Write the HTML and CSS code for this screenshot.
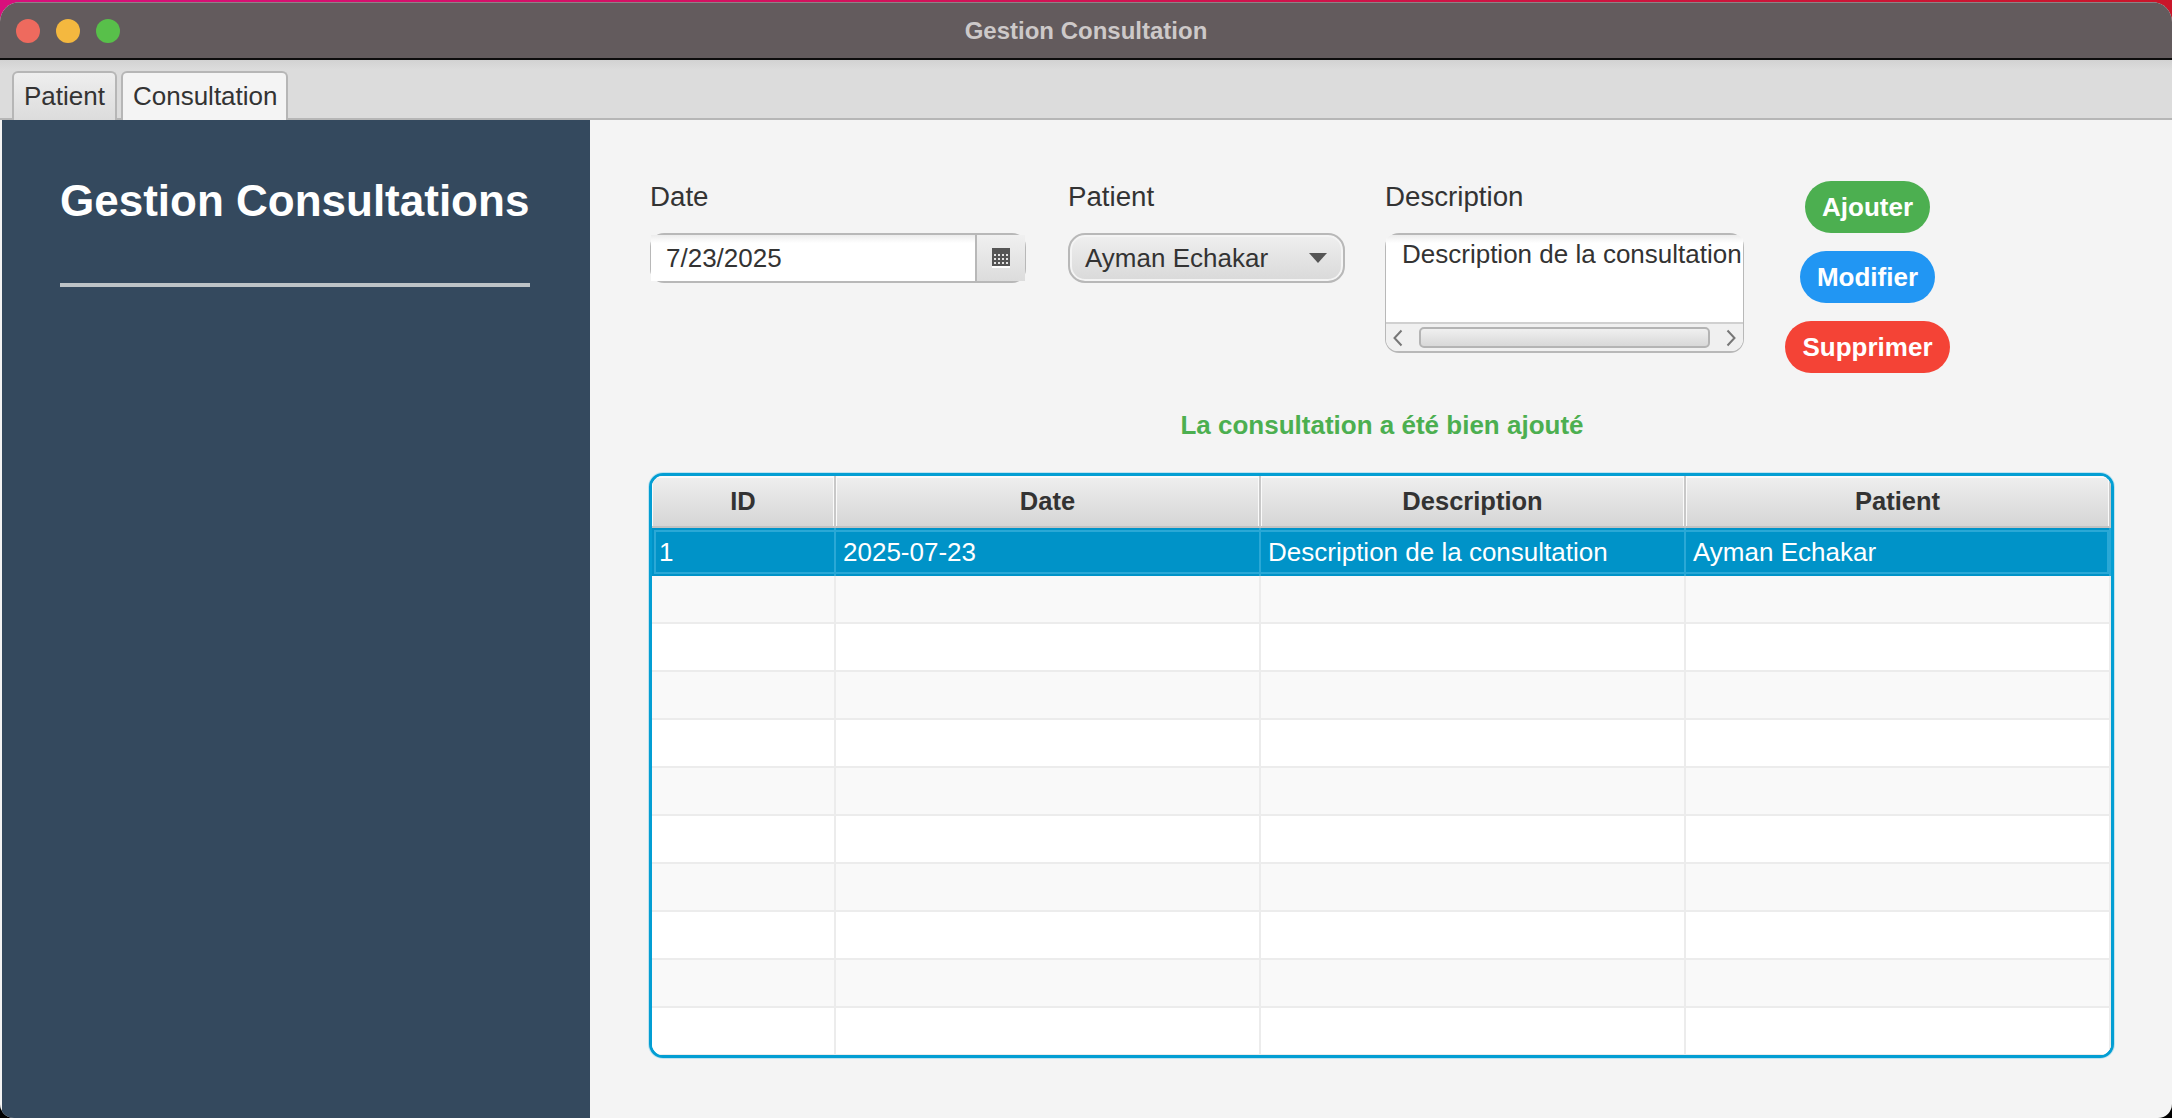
FILE: index.html
```html
<!DOCTYPE html>
<html lang="fr">
<head>
    <meta charset="UTF-8">
    <meta name="viewport" content="width=device-width, initial-scale=1.0">
    <title>Gestion Consultation</title>
    <link rel="stylesheet" href="styles.css">
</head>
<body>
    <div class="window">
        <!-- Barre de titre -->
        <div class="titlebar">
            <div class="lights">
                <span class="light light-red"></span>
                <span class="light light-yellow"></span>
                <span class="light light-green"></span>
            </div>
            <div class="window-title">Gestion Consultation</div>
        </div>

        <!-- Onglets -->
        <div class="tabs">
            <div class="tab">Patient</div>
            <div class="tab tab-active">Consultation</div>
        </div>

        <div class="content">
            <!-- Panneau gauche -->
            <aside class="sidebar">
                <h1 class="sidebar-title">Gestion Consultations</h1>
                <div class="sidebar-rule"></div>
            </aside>

            <main class="main">
                <!-- Formulaire -->
                <div class="form-row">
                    <div class="field field-date">
                        <div class="field-label">Date</div>
                        <div class="date-picker">
                            <div class="date-inner">
                                <div class="date-value">7/23/2025</div>
                                <div class="date-button">
                                    <svg class="calendar-icon" width="18" height="20" viewBox="0 0 18 20">
                                        <rect width="18" height="18" fill="#555"/>
                                        <rect y="18" width="18" height="2" fill="#fff"/>
                                        <g fill="#e4e4e4">
                                            <rect x="2" y="6" width="2" height="2"/><rect x="6" y="6" width="2" height="2"/><rect x="10" y="6" width="2" height="2"/><rect x="14" y="6" width="2" height="2"/>
                                            <rect x="2" y="10" width="2" height="2"/><rect x="6" y="10" width="2" height="2"/><rect x="10" y="10" width="2" height="2"/><rect x="14" y="10" width="2" height="2"/>
                                            <rect x="2" y="14" width="2" height="2"/><rect x="6" y="14" width="2" height="2"/><rect x="10" y="14" width="2" height="2"/><rect x="14" y="14" width="2" height="2"/>
                                        </g>
                                    </svg>
                                </div>
                            </div>
                        </div>
                    </div>

                    <div class="field field-patient">
                        <div class="field-label">Patient</div>
                        <div class="combo">
                            <span class="combo-value">Ayman Echakar</span>
                            <svg width="18" height="10" viewBox="0 0 18 10"><path d="M0 0H18L9 10Z" fill="#555"/></svg>
                        </div>
                    </div>

                    <div class="field field-description">
                        <div class="field-label">Description</div>
                        <div class="text-area">
                            <div class="text-area-inner">
                                <div class="text-area-value">Description de la consultation</div>
                                <div class="scrollbar">
                                    <svg width="12" height="18" viewBox="0 0 12 18"><path d="M9.5 1.5L2.5 9L9.5 16.5" fill="none" stroke="#777" stroke-width="2"/></svg>
                                    <div class="scroll-thumb"></div>
                                    <svg width="12" height="18" viewBox="0 0 12 18"><path d="M2.5 1.5L9.5 9L2.5 16.5" fill="none" stroke="#777" stroke-width="2"/></svg>
                                </div>
                            </div>
                        </div>
                    </div>

                    <div class="actions">
                        <button class="btn btn-add">Ajouter</button>
                        <button class="btn btn-edit">Modifier</button>
                        <button class="btn btn-delete">Supprimer</button>
                    </div>
                </div>

                <div class="message">La consultation a été bien ajouté</div>

                <!-- Tableau -->
                <div class="table-box">
                    <table class="table">
                        <colgroup>
                            <col class="col-id"><col class="col-wide"><col class="col-wide"><col class="col-wide">
                        </colgroup>
                        <thead>
                            <tr><th>ID</th><th>Date</th><th>Description</th><th>Patient</th></tr>
                        </thead>
                        <tbody>
                            <tr class="row-selected"><td>1</td><td>2025-07-23</td><td>Description de la consultation</td><td>Ayman Echakar</td></tr>
                            <tr><td></td><td></td><td></td><td></td></tr>
                            <tr><td></td><td></td><td></td><td></td></tr>
                            <tr><td></td><td></td><td></td><td></td></tr>
                            <tr><td></td><td></td><td></td><td></td></tr>
                            <tr><td></td><td></td><td></td><td></td></tr>
                            <tr><td></td><td></td><td></td><td></td></tr>
                            <tr><td></td><td></td><td></td><td></td></tr>
                            <tr><td></td><td></td><td></td><td></td></tr>
                            <tr><td></td><td></td><td></td><td></td></tr>
                            <tr><td></td><td></td><td></td><td></td></tr>
                        </tbody>
                    </table>
                </div>
            </main>
        </div>
    </div>
</body>
</html>
```

FILE: styles.css
```css
/* Fond derrière la fenêtre */
body {
    margin: 0;
    height: 100vh;
    overflow: hidden;
    background: linear-gradient(to bottom, transparent 0, transparent 30px, #000 30px), linear-gradient(to right, #d80f7c, #c9162a);
    font-family: "Liberation Sans", Arial, sans-serif;
    color: #333;
}

.window {
    margin-top: 2px;
    height: 1116px;
    display: flex;
    flex-direction: column;
    border-radius: 20px 20px 14px 14px;
    overflow: hidden;
    background-color: #f4f4f4;
}

/* Barre de titre */
.titlebar {
    height: 56px;
    flex: none;
    display: flex;
    align-items: center;
    justify-content: center;
    position: relative;
    background-color: #635b5d;
    border-top: 1px solid #8a8486;
    border-bottom: 2px solid #0d0c0c;
    box-sizing: border-box;
    height: 58px;
}

.lights {
    position: absolute;
    left: 16px;
    top: 16px;
    display: flex;
    gap: 16px;
}

.light {
    width: 24px;
    height: 24px;
    border-radius: 50%;
}

.light-red { background-color: #ee6a5e; }
.light-yellow { background-color: #f4b83f; }
.light-green { background-color: #58c04a; }

.window-title {
    font-size: 24px;
    font-weight: bold;
    color: #cdc9c9;
}

/* Onglets */
.tabs {
    height: 60px;
    flex: none;
    box-sizing: border-box;
    display: flex;
    align-items: flex-end;
    gap: 4px;
    padding-left: 12px;
    background: linear-gradient(to bottom, #d2d2d2, #dcdcdc 10px);
    border-bottom: 2px solid #b6b6b6;
}

.tab {
    height: 49px;
    margin-bottom: -2px;
    box-sizing: border-box;
    padding: 0 10px;
    display: flex;
    align-items: center;
    font-size: 26px;
    color: #333;
    background: linear-gradient(to bottom, #eeeeee, #dcdcdc);
    border: 2px solid #b6b6b6;
    border-bottom: none;
    border-radius: 6px 6px 0 0;
}

.tab-active {
    background: #f4f4f4;
    padding: 0 8px 0 10px;
}

.content {
    flex: 1;
    display: flex;
    min-height: 0;
}

/* Panneau gauche */
.sidebar {
    width: 588px;
    margin-left: 2px;
    flex: none;
    box-sizing: border-box;
    padding: 56px 60px 0 58px;
    background-color: #34495e;
}

.sidebar-title {
    margin: 0;
    font-size: 44px;
    line-height: 50px;
    font-weight: bold;
    color: #fff;
    white-space: nowrap;
}

.sidebar-rule {
    margin-top: 57px;
    height: 4px;
    background-color: #bdc3c7;
}

/* Zone principale */
.main {
    flex: 1;
    box-sizing: border-box;
    padding: 61px 0 0 58px;
}

.form-row {
    display: flex;
    align-items: flex-start;
    padding-left: 2px;
}

.field-label {
    height: 32px;
    line-height: 32px;
    margin-bottom: 20px;
    font-size: 27.7px;
    color: #333;
}

.field-date { width: 376px; margin-right: 42px; }
.field-patient { width: 277px; margin-right: 40px; }
.field-description { width: 359px; margin-right: 41px; }

/* Date */
.date-picker {
    height: 50px;
    box-sizing: border-box;
    padding: 2px 1px;
    border-radius: 14px;
    background-color: #b8b8b8;
}

.date-inner {
    height: 100%;
    display: flex;
}

.date-value {
    flex: 1;
    padding-left: 15px;
    line-height: 46px;
    font-size: 26px;
    background: linear-gradient(to bottom, #ececec, #fff 8px);
}

.date-button {
    width: 48px;
    border-left: 2px solid #b8b8b8;
    display: flex;
    align-items: center;
    justify-content: center;
    background: linear-gradient(to bottom, #f0f0f0, #dcdcdc);
}

/* Liste patient */
.combo {
    height: 50px;
    box-sizing: border-box;
    padding: 0 16px 0 15px;
    display: flex;
    align-items: center;
    justify-content: space-between;
    font-size: 26px;
    border: 2px solid #b8b8b8;
    border-radius: 17px;
    background: linear-gradient(to bottom, #efefef, #d9d9d9);
    box-shadow: inset 0 0 0 2px #f4f4f4;
}

/* Zone de texte */
.text-area {
    height: 120px;
    box-sizing: border-box;
    padding: 2px 1px;
    border-radius: 14px;
    background-color: #b8b8b8;
}

.text-area-inner {
    height: 100%;
    display: flex;
    flex-direction: column;
    overflow: hidden;
    border-radius: 6px 6px 12px 12px;
    background-color: #fff;
}

.text-area-value {
    flex: 1;
    padding: 4px 0 0 16px;
    line-height: 30px;
    font-size: 26px;
    white-space: nowrap;
    background: linear-gradient(to bottom, #ececec, #fff 8px);
}

.scrollbar {
    height: 29px;
    flex: none;
    box-sizing: border-box;
    border-top: 2px solid #d0d0d0;
    padding: 0 6px 0 6px;
    display: flex;
    align-items: center;
    justify-content: space-between;
    background-color: #f0f0f0;
}

.scroll-thumb {
    width: 291px;
    height: 21px;
    box-sizing: border-box;
    border: 2px solid #b4b4b4;
    border-radius: 5px;
    background: linear-gradient(to bottom, #f0f0f0, #d8d8d8);
}

/* Boutons */
.actions {
    width: 165px;
    display: flex;
    flex-direction: column;
    align-items: center;
    gap: 18px;
}

.btn {
    height: 52px;
    padding: 0 17px;
    border: none;
    border-radius: 26px;
    font-family: inherit;
    font-size: 26px;
    font-weight: bold;
    color: #fff;
}

.btn-add { background-color: #4caf50; }
.btn-edit { background-color: #2196f3; }
.btn-delete { background-color: #f44336; }

.message {
    margin-top: 37px;
    margin-bottom: 33px;
    height: 30px;
    line-height: 30px;
    text-align: center;
    width: 1468px;
    font-size: 26px;
    font-weight: bold;
    color: #4caf50;
}

/* Tableau */
.table-box {
    width: 1465px;
    height: 585px;
    margin-left: 1px;
    box-sizing: border-box;
    border: 3px solid #039ed3;
    border-radius: 14px;
    box-shadow: 0 0 0 1px #bfe3f0;
    overflow: hidden;
    background-color: #fff;
}

.table {
    width: 1459px;
    table-layout: fixed;
    border-collapse: separate;
    border-spacing: 0;
}

.col-id { width: 184px; }
.col-wide { width: 425px; }

.table th {
    height: 52px;
    padding: 0;
    box-sizing: border-box;
    font-size: 25.5px;
    font-weight: bold;
    color: #333;
    background: linear-gradient(to bottom, #efefef, #d6d6d6);
    border-right: 2px solid #c8c8c8;
    border-bottom: 2px solid #c2c2c2;
    box-shadow: inset 0 1px 0 1px #fafafa;
}

.table td {
    height: 48px;
    padding: 0 0 0 7px;
    box-sizing: border-box;
    font-size: 26px;
    white-space: nowrap;
    border-right: 2px solid #ececec;
    border-bottom: 2px solid #ececec;
}

.table tbody tr:nth-child(even) td { background-color: #f9f9f9; }
.table tbody tr:nth-child(odd) td { background-color: #fff; }

.table tbody tr.row-selected td {
    background-color: #0093c8;
    color: #fff;
    border-right-color: #2aa8d6;
    border-bottom: none;
}

.row-selected {
    outline: 2px solid #2aa8d6;
    outline-offset: -4px;
}
```
